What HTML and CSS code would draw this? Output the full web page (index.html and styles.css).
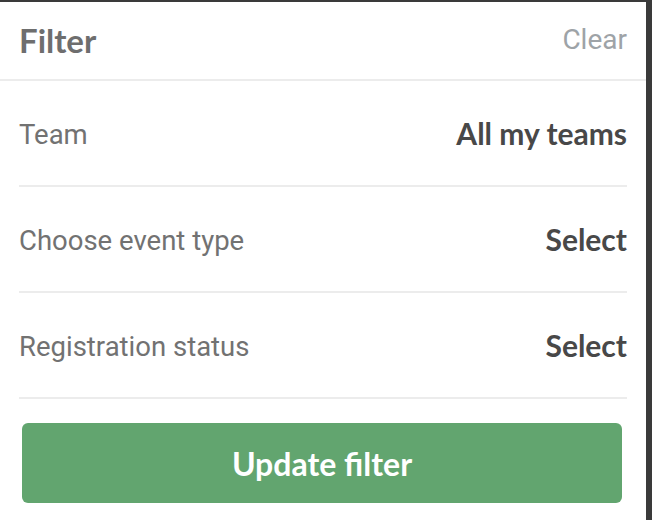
FILE: index.html
```html
<!DOCTYPE html>
<html>
<head>
<meta charset="utf-8">
<link rel="stylesheet" href="styles.css">
</head>
<body>
<div class="panel">
  <div class="header">
    <span class="title">Filter</span>
    <span class="clear">Clear</span>
  </div>
  <div class="rows">
    <div class="row"><span class="label">Team</span><span class="value">All my teams</span></div>
    <div class="row"><span class="label">Choose event type</span><span class="value">Select</span></div>
    <div class="row"><span class="label">Registration status</span><span class="value">Select</span></div>
  </div>
  <div class="actions">
    <button class="btn">Update filter</button>
  </div>
</div>
</body>
</html>
```
FILE: styles.css
```css
html, body { margin: 0; padding: 0; }
body {
  background: #3a3a3a;
  width: 652px;
  height: 520px;
  overflow: hidden;
}
.panel {
  margin-top: 2px;
  width: 646px;
  height: 518px;
  background: #ffffff;
  display: flex;
  flex-direction: column;
}
.header {
  height: 77px;
  border-bottom: 2px solid #ececec;
  display: flex;
  align-items: center;
  justify-content: space-between;
  padding: 0 19px 2px;
  box-sizing: border-box;
  height: 79px;
}
.title {
  font-family: Lato, "Liberation Sans", sans-serif;
  font-weight: 700;
  font-size: 33px;
  color: #6e6e6e;
}
.clear {
  font-family: Roboto, "Liberation Sans", sans-serif;
  font-size: 28px;
  color: #9ea3a7;
}
.rows { padding: 0 19px; }
.row {
  height: 104px;
  border-bottom: 2px solid #ececec;
  display: flex;
  align-items: center;
  justify-content: space-between;
}
.label {
  font-family: Roboto, "Liberation Sans", sans-serif;
  font-size: 27.5px;
  color: #727272;
  padding-top: 2px;
}
.value {
  font-family: Lato, "Liberation Sans", sans-serif;
  font-weight: 700;
  font-size: 30px;
  color: #484848;
}
.actions { padding: 24px 24px 0 22px; }
.btn {
  width: 600px;
  height: 80px;
  border: none;
  border-radius: 6px;
  background: #62a56f;
  color: #ffffff;
  font-family: Lato, "Liberation Sans", sans-serif;
  font-weight: 700;
  font-size: 32px;
  padding: 0;
}
```
